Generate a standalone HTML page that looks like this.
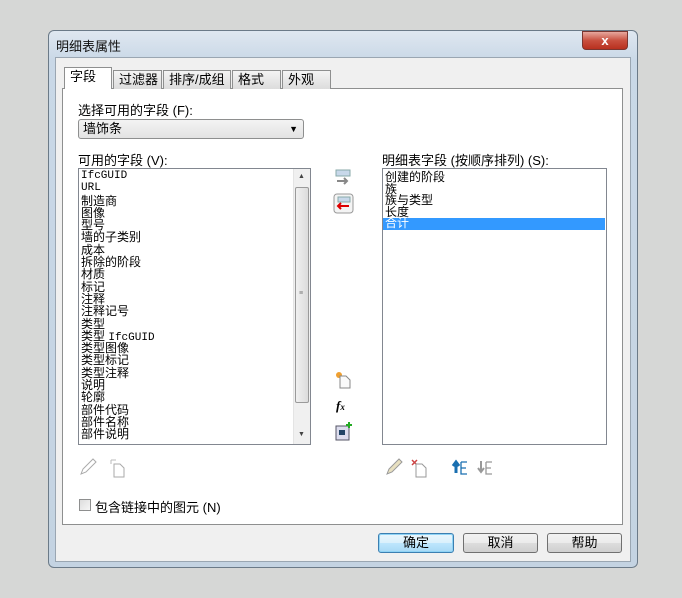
<!DOCTYPE html>
<html><head><meta charset="utf-8"><style>
*{margin:0;padding:0;box-sizing:border-box}
body{width:682px;height:598px;background:#d6d7d6;position:relative;overflow:hidden;font-family:"Liberation Sans","Noto Sans CJK SC",sans-serif;font-size:12px;color:#000}
.abs{position:absolute}
.win{left:48px;top:30px;width:590px;height:538px;border:1px solid #6b7a88;border-radius:6px;background:linear-gradient(#dfe7f0,#c9d8e7 30px,#c4d3e2);}
.client{left:55px;top:57px;width:576px;height:505px;background:#f0f0f0;border:1px solid #9aa6b2}
.panel{left:62px;top:88px;width:561px;height:437px;background:#fff;border:1px solid #8e8f8f}
.tab{top:70px;height:19px;border:1px solid #8e8f8f;border-bottom:none;background:linear-gradient(#f4f4f4,#dcdcdc);font-size:13px;line-height:17px;padding-left:5px}
.list{background:#fff;border:1px solid #828790}
.item{font-size:12px;line-height:12.3px;height:12.3px;white-space:nowrap;padding-left:2px}
#r .item{line-height:11.6px;height:11.6px}
.btn{top:533px;height:20px;border:1px solid #707070;border-radius:3px;background:linear-gradient(#f2f2f2,#ebebeb 50%,#dddddd 50%,#cfcfcf);text-align:center;font-size:13px;line-height:18px}
.mono{font-family:"Liberation Mono",monospace;font-size:11px}
</style></head><body>
<div class="abs win"></div>
<div class="abs" style="left:56px;top:36px;font-size:13px;color:#111">明细表属性</div>
<div class="abs" style="left:582px;top:31px;width:46px;height:19px;border:1px solid #7a3630;border-radius:0 0 4px 4px;background:linear-gradient(#e7a89e,#c9503f 50%,#b8301f);color:#fff;text-align:center;font-weight:bold;font-size:13px;line-height:17px">x</div>
<div class="abs client"></div>
<div class="abs panel"></div>
<div class="abs tab" style="left:64px;top:67px;width:48px;height:22px;background:#fff;z-index:2">字段</div>
<div class="abs tab" style="left:113px;width:49px">过滤器</div>
<div class="abs tab" style="left:163px;width:68px">排序/成组</div>
<div class="abs tab" style="left:232px;width:49px">格式</div>
<div class="abs tab" style="left:282px;width:49px">外观</div>

<div class="abs" style="left:78px;top:100px;font-size:13px">选择可用的字段 (F):</div>
<div class="abs" style="left:78px;top:119px;width:226px;height:20px;border:1px solid #8e8f8f;border-radius:3px;background:linear-gradient(#f3f3f3,#e3e3e3);font-size:13px;line-height:18px;padding-left:4px">墙饰条<span style="position:absolute;right:5px;top:0;font-size:9px">▼</span></div>

<div class="abs" style="left:78px;top:150px;font-size:13px">可用的字段 (V):</div>
<div class="abs list" style="left:78px;top:168px;width:233px;height:277px;overflow:hidden">
<div style="padding-top:1px">
<div class="item mono">IfcGUID</div><div class="item mono">URL</div><div class="item">制造商</div><div class="item">图像</div><div class="item">型号</div><div class="item">墙的子类别</div><div class="item">成本</div><div class="item">拆除的阶段</div><div class="item">材质</div><div class="item">标记</div><div class="item">注释</div><div class="item">注释记号</div><div class="item">类型</div><div class="item">类型 <span class="mono">IfcGUID</span></div><div class="item">类型图像</div><div class="item">类型标记</div><div class="item">类型注释</div><div class="item">说明</div><div class="item">轮廓</div><div class="item">部件代码</div><div class="item">部件名称</div><div class="item">部件说明</div>
</div>
<div class="abs" style="right:0;top:0;width:17px;height:275px;background:#f0f0f0;border-left:1px solid #e4e4e4">
<div class="abs" style="left:4px;top:4px;font-size:7px;color:#444">▲</div>
<div class="abs" style="left:1px;top:18px;width:14px;height:216px;border:1px solid #9a9a9a;border-radius:2px;background:linear-gradient(90deg,#f0f0f0,#dcdcdc)"><div style="position:absolute;left:3px;top:104px;font-size:7px;color:#777;line-height:3px">≡</div></div>
<div class="abs" style="left:4px;top:262px;font-size:7px;color:#444">▼</div>
</div>
</div>

<div class="abs" style="left:382px;top:150px;font-size:13px">明细表字段 (按顺序排列) (S):</div>
<div class="abs list" id="r" style="left:382px;top:168px;width:225px;height:277px">
<div style="padding-top:3px">
<div class="item">创建的阶段</div><div class="item">族</div><div class="item">族与类型</div><div class="item">长度</div><div class="item" style="background:#3399ff;color:#fff;margin-right:1px">合计</div>
</div></div>

<svg class="abs" style="left:333px;top:168px" width="22" height="50"><rect x="3" y="2" width="14" height="6" fill="#c8d8ea" stroke="#8aa" /><path d="M4 13h10M11 10l3 3-3 3" stroke="#888" stroke-width="2" fill="none"/><rect x="1" y="26" width="19" height="19" rx="3" fill="#f4f4f4" stroke="#999"/><rect x="5" y="29" width="12" height="5" fill="#c8d8ea" stroke="#8aa"/><path d="M16 38H5M8 35l-3 3 3 3" stroke="#d00" stroke-width="2" fill="none"/></svg>
<svg class="abs" style="left:334px;top:370px" width="20" height="72"><circle cx="5" cy="5" r="3" fill="#f0a030"/><path d="M6 6h6l4 4v8H6z" fill="#fafafa" stroke="#888"/><text x="2" y="40" font-family="Liberation Serif" font-style="italic" font-weight="bold" font-size="13">f<tspan font-size="9">x</tspan></text><rect x="2" y="56" width="13" height="14" fill="#dde" stroke="#556"/><rect x="5" y="60" width="6" height="5" fill="#246"/><path d="M15 52v6M12 55h6" stroke="#2a2" stroke-width="2"/></svg>

<svg class="abs" style="left:78px;top:456px" width="50" height="22"><path d="M3 18l2-5 10-10 3 3-10 10z" fill="#fff" stroke="#aaa"/><path d="M33 4h5M33 4v4" stroke="#bbb"/><path d="M36 8h6l4 4v9H36z" fill="#fff" stroke="#aaa"/></svg>
<svg class="abs" style="left:384px;top:456px" width="120" height="22"><path d="M3 18l2-5 10-10 3 3-10 10z" fill="#e8e0c0" stroke="#999"/><path d="M28 4l5 5M33 4l-5 5" stroke="#c44" stroke-width="1.5"/><path d="M32 8h6l4 4v9H32z" fill="#fff" stroke="#999"/><path d="M72 17V7M69 10l3-4 3 4" stroke="#1a6fb0" stroke-width="3" fill="none"/><path d="M77 6h6M77 6v12h6M77 12h5" stroke="#1a6fb0" stroke-width="1.3" fill="none"/><path d="M97 5v10M94 12l3 4 3-4" stroke="#999" stroke-width="2" fill="none"/><path d="M102 6h6M102 6v12h6M102 12h5" stroke="#999" stroke-width="1.3" fill="none"/></svg>

<div class="abs" style="left:79px;top:499px;width:12px;height:12px;border:1px solid #8e8f8f;background:linear-gradient(135deg,#ddd,#f6f6f6)"></div>
<div class="abs" style="left:95px;top:497px;font-size:13px">包含链接中的图元 (N)</div>

<div class="abs btn" style="left:378px;width:76px;border-color:#3c7fb1;box-shadow:0 0 0 1px #8fd3f5 inset;background:linear-gradient(#eaf6fd,#d9f0fc 50%,#bee6fd 50%,#a7d9f5)">确定</div>
<div class="abs btn" style="left:463px;width:75px">取消</div>
<div class="abs btn" style="left:547px;width:75px">帮助</div>
</body></html>
